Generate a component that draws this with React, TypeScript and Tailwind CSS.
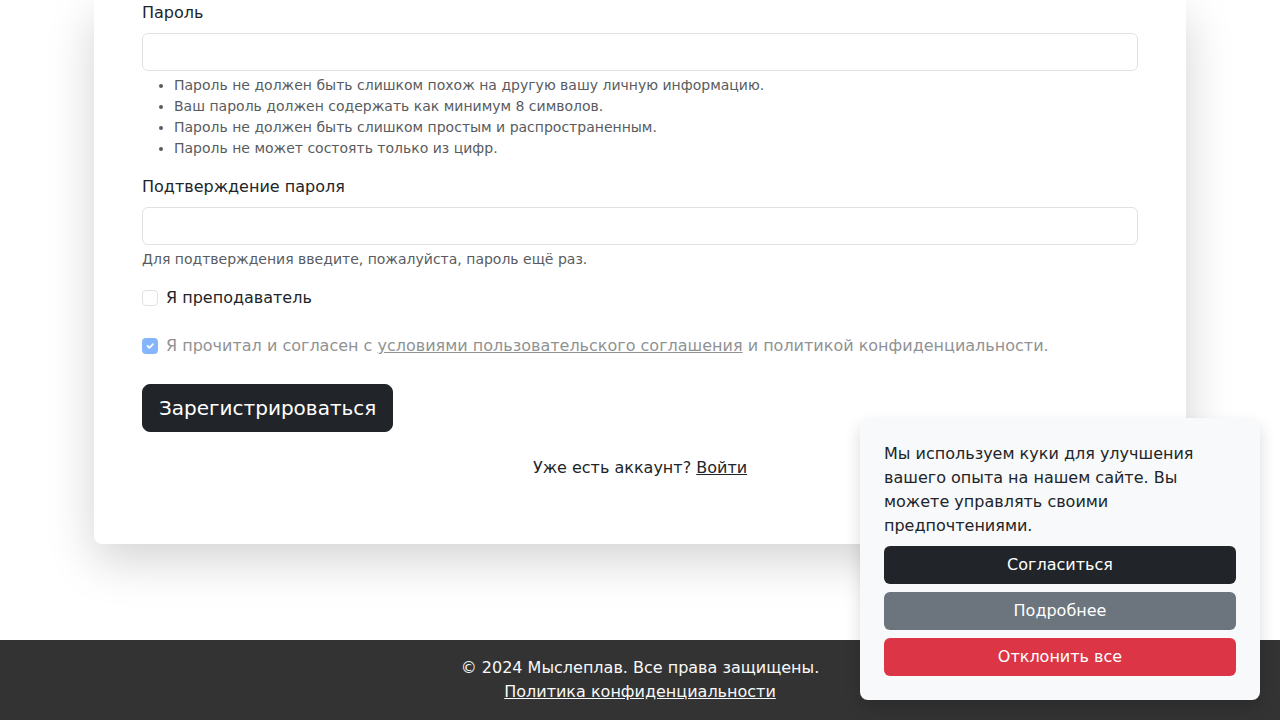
import React from "react";

export default function App() {
  return (
    <div className="relative h-[720px] overflow-hidden bg-white font-['DejaVu_Sans',sans-serif] text-[16px] leading-[24px] text-[#212529]">
      <div className="mx-auto w-[1092px] rounded-b-[8px] bg-white px-12 pb-12 shadow-[0_1rem_3rem_rgba(0,0,0,0.175)]">
        <div>
          <label className="block pt-[1px]">Пароль</label>
          <div className="mt-2 h-[38px] rounded-[6px] border border-[#dee2e6] bg-white" />
          <ul className="mt-1 list-disc pl-8 text-[14px] leading-[21px] text-[#595c5f]">
            <li>Пароль не должен быть слишком похож на другую вашу личную информацию.</li>
            <li>Ваш пароль должен содержать как минимум 8 символов.</li>
            <li>Пароль не должен быть слишком простым и распространенным.</li>
            <li>Пароль не может состоять только из цифр.</li>
          </ul>
        </div>
        <div className="mt-4">
          <label className="block">Подтверждение пароля</label>
          <div className="mt-2 h-[38px] rounded-[6px] border border-[#dee2e6] bg-white" />
          <div className="mt-1 text-[14px] leading-[21px] text-[#595c5f]">
            Для подтверждения введите, пожалуйста, пароль ещё раз.
          </div>
        </div>
        <div className="mt-4 flex items-start">
          <span className="mt-1 h-4 w-4 shrink-0 rounded-[4px] border border-[#dee2e6] bg-white" />
          <span className="ml-2">Я преподаватель</span>
        </div>
        <div className="mt-6 flex items-start opacity-50">
          <span className="mt-1 flex h-4 w-4 shrink-0 items-center justify-center rounded-[4px] bg-[#0d6efd]">
            <svg width="12" height="12" viewBox="0 0 20 20" fill="none">
              <path d="M6 10l3 3l6-6" stroke="#fff" strokeWidth="3" strokeLinecap="round" strokeLinejoin="round" />
            </svg>
          </span>
          <span className="ml-2">
            Я прочитал и согласен с <span className="underline">условиями пользовательского соглашения</span> и политикой конфиденциальности.
          </span>
        </div>
        <button className="mt-[26px] h-12 rounded-[8px] border border-[#212529] bg-[#212529] px-4 text-[20px] leading-[30px] text-white">
          Зарегистрироваться
        </button>
        <p className="mb-4 mt-6 text-center">
          Уже есть аккаунт? <span className="underline">Войти</span>
        </p>
      </div>

      <footer className="mt-[96px] bg-[#333333] py-4 text-center text-[#f8f9fa]">
        <div>© 2024 Мыслеплав. Все права защищены.</div>
        <div className="underline">Политика конфиденциальности</div>
      </footer>

      <div className="absolute bottom-5 right-5 w-[400px] rounded-[8px] bg-[#f8f9fa] p-6 shadow-[0_0.5rem_1rem_rgba(0,0,0,0.15)]">
        <p className="mb-2">Мы используем куки для улучшения вашего опыта на нашем сайте. Вы можете управлять своими предпочтениями.</p>
        <div className="flex flex-col gap-2">
          <button className="h-[38px] w-full rounded-[6px] bg-[#212529] text-white">Согласиться</button>
          <button className="h-[38px] w-full rounded-[6px] bg-[#6c757d] text-white">Подробнее</button>
          <button className="h-[38px] w-full rounded-[6px] bg-[#dc3545] text-white">Отклонить все</button>
        </div>
      </div>
    </div>
  );
}
